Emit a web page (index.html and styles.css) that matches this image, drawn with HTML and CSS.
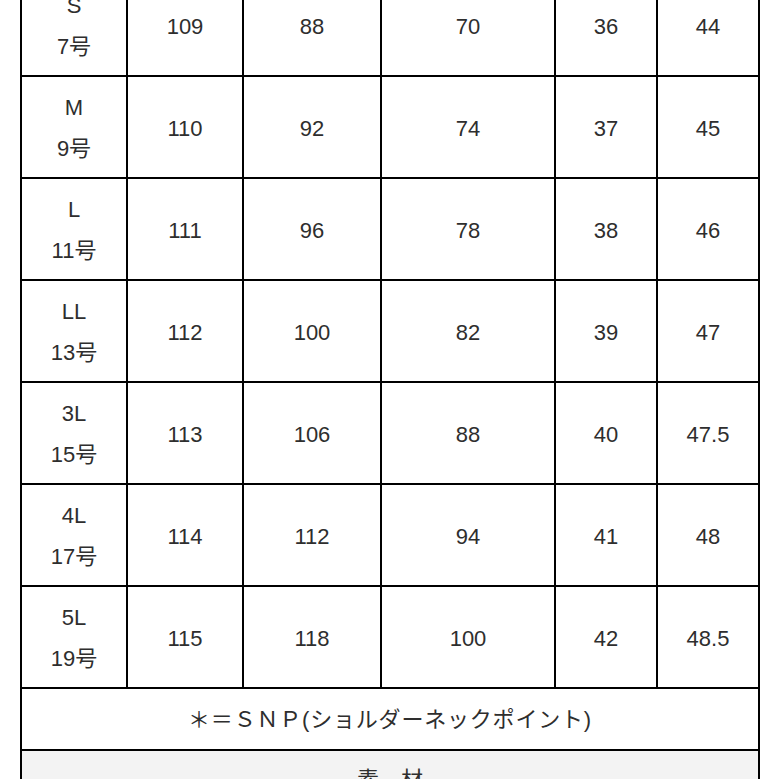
FILE: index.html
```html
<!DOCTYPE html>
<html lang="ja">
<head>
<meta charset="utf-8">
<title>サイズ表</title>
<link rel="stylesheet" href="styles.css">
</head>
<body>
<div class="size-table">
  <div class="cell size"><span>S</span><span>7号</span></div>
  <div class="cell">109</div><div class="cell">88</div><div class="cell">70</div><div class="cell">36</div><div class="cell">44</div>

  <div class="cell size"><span>M</span><span>9号</span></div>
  <div class="cell">110</div><div class="cell">92</div><div class="cell">74</div><div class="cell">37</div><div class="cell">45</div>

  <div class="cell size"><span>L</span><span>11号</span></div>
  <div class="cell">111</div><div class="cell">96</div><div class="cell">78</div><div class="cell">38</div><div class="cell">46</div>

  <div class="cell size"><span>LL</span><span>13号</span></div>
  <div class="cell">112</div><div class="cell">100</div><div class="cell">82</div><div class="cell">39</div><div class="cell">47</div>

  <div class="cell size"><span>3L</span><span>15号</span></div>
  <div class="cell">113</div><div class="cell">106</div><div class="cell">88</div><div class="cell">40</div><div class="cell">47.5</div>

  <div class="cell size"><span>4L</span><span>17号</span></div>
  <div class="cell">114</div><div class="cell">112</div><div class="cell">94</div><div class="cell">41</div><div class="cell">48</div>

  <div class="cell size"><span>5L</span><span>19号</span></div>
  <div class="cell">115</div><div class="cell">118</div><div class="cell">100</div><div class="cell">42</div><div class="cell">48.5</div>

  <div class="cell note">＊＝ＳＮＰ(ショルダーネックポイント)</div>
  <div class="cell section">素　材</div>
</div>
</body>
</html>
```

FILE: styles.css
```css
html, body {
  margin: 0;
  padding: 0;
  background: #ffffff;
}

body {
  font-family: "Liberation Sans", "Noto Sans CJK JP", sans-serif;
  color: #2e2e2e;
  font-size: 22px;
}

.size-table {
  display: grid;
  grid-template-columns: 106px 116px 138px 174px 102px 102px;
  width: 740px;
  box-sizing: border-box;
  margin: -25px 0 0 20px;
  border-left: 2px solid #000000;
}

.cell {
  box-sizing: border-box;
  height: 102px;
  padding-top: 3px;
  border-right: 2px solid #000000;
  border-bottom: 2px solid #000000;
  display: flex;
  align-items: center;
  justify-content: center;
  text-align: center;
  line-height: 40px;
}

.size {
  flex-direction: column;
  line-height: 41px;
  padding-top: 2px;
}

.note {
  grid-column: 1 / -1;
  height: 62px;
  padding-top: 1px;
  letter-spacing: 0.8px;
}

.section {
  grid-column: 1 / -1;
  height: 80px;
  align-items: flex-start;
  padding-top: 9px;
  background: #f3f3f3;
}
```
